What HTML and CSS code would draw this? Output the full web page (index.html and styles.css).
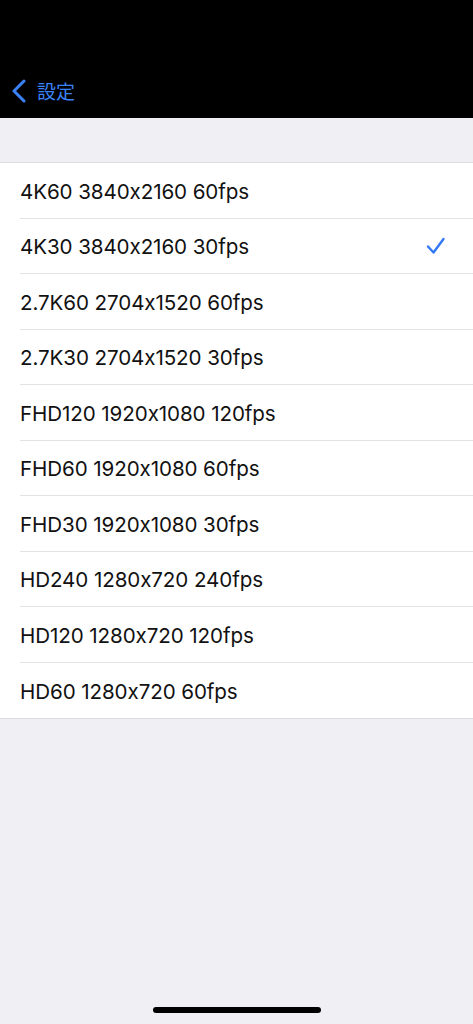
FILE: index.html
```html
<!DOCTYPE html>
<html lang="ja">
<head>
<meta charset="utf-8">
<link rel="stylesheet" href="styles.css">
</head>
<body>
<div class="screen">
  <header class="nav">
    <div class="back">
      <svg class="chev" width="16" height="24" viewBox="0 0 16 24"><path d="M13 2 L3 12 L13 22" fill="none" stroke="#3b82f6" stroke-width="3" stroke-linecap="round" stroke-linejoin="round"/></svg>
      <span class="back-label">設定</span>
    </div>
  </header>
  <main class="content">
    <ul class="list">
      <li class="row"><span class="label">4K60 3840x2160 60fps</span></li>
      <li class="row"><span class="label">4K30 3840x2160 30fps</span>
        <svg class="check" width="20" height="18" viewBox="0 0 20 18"><path d="M2 9.5 L7.5 15.5 L17.5 2" fill="none" stroke="#3478f6" stroke-width="2.4" stroke-linecap="round" stroke-linejoin="round"/></svg>
      </li>
      <li class="row"><span class="label">2.7K60 2704x1520 60fps</span></li>
      <li class="row"><span class="label">2.7K30 2704x1520 30fps</span></li>
      <li class="row"><span class="label">FHD120 1920x1080 120fps</span></li>
      <li class="row"><span class="label">FHD60 1920x1080 60fps</span></li>
      <li class="row"><span class="label">FHD30 1920x1080 30fps</span></li>
      <li class="row"><span class="label">HD240 1280x720 240fps</span></li>
      <li class="row"><span class="label">HD120 1280x720 120fps</span></li>
      <li class="row"><span class="label">HD60 1280x720 60fps</span></li>
    </ul>
  </main>
  <div class="home"><div class="home-bar"></div></div>
</div>
</body>
</html>
```

FILE: styles.css
```css
* { box-sizing: border-box; }
html, body { margin: 0; padding: 0; }
body {
  font-family: Inter, "Noto Sans CJK JP", sans-serif;
  background: #efeff4;
}
.screen {
  width: 473px;
  height: 1024px;
  display: flex;
  flex-direction: column;
  background: #efeff4;
  overflow: hidden;
}
.nav {
  height: 118px;
  background: #000;
  display: flex;
  align-items: flex-end;
  padding: 0 0 15px 11px;
}
.back {
  display: flex;
  align-items: center;
  gap: 10px;
}
.back-label {
  color: #3b82f6;
  font-family: "Noto Sans CJK JP", sans-serif;
  font-size: 19px;
  line-height: 24px;
}
.content {
  flex: 1;
  padding-top: 44px;
}
.list {
  list-style: none;
  margin: 0;
  padding: 0 0 0 20px;
  background: #fff;
  border-top: 1px solid #dcdce0;
  border-bottom: 1px solid #dcdce0;
}
.row {
  height: 55.5px;
  display: flex;
  align-items: center;
  justify-content: space-between;
  padding-right: 27px;
  border-bottom: 1px solid #e3e3e6;
}
.row:last-child { border-bottom: none; }
.label {
  font-size: 20.6px;
  color: #111;
  letter-spacing: -0.1px;
  padding-top: 2px;
}
.check { display: block; }
.home {
  height: 34px;
  display: flex;
  justify-content: center;
  padding-top: 17px;
}
.home-bar {
  width: 168px;
  height: 6px;
  border-radius: 3px;
  background: #000;
}
```
